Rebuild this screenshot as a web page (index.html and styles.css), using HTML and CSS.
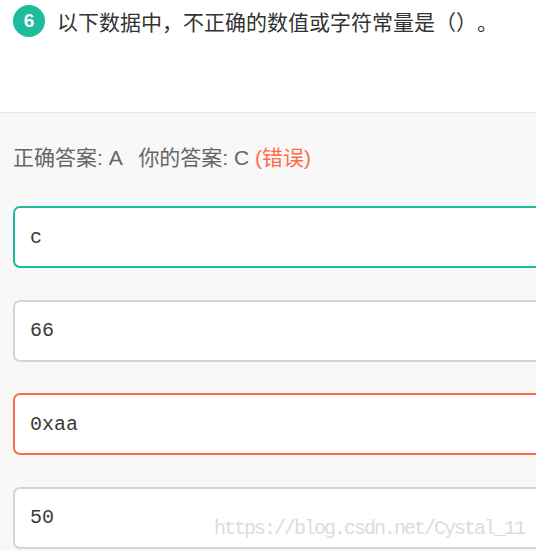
FILE: index.html
```html
<!DOCTYPE html>
<html lang="zh-CN">
<head>
<meta charset="utf-8">
<title>题目 6</title>
<link rel="stylesheet" href="styles.css">
</head>
<body>
<div class="page">
  <header class="question">
    <div class="question-row">
      <span class="badge">6</span>
      <span class="question-text">以下数据中，不正确的数值或字符常量是（）。</span>
    </div>
  </header>
  <section class="answers">
    <p class="result">
      <span class="label">正确答案: A</span>
      <span class="label">你的答案: C</span>
      <span class="wrong">(错误)</span>
    </p>
    <ul class="options">
      <li class="option option-correct">c</li>
      <li class="option">66</li>
      <li class="option option-wrong">0xaa</li>
      <li class="option">50</li>
    </ul>
  </section>
  <div class="watermark">https://blog.csdn.net/Cystal_11</div>
</div>
</body>
</html>
```

FILE: styles.css
```css
html, body {
  margin: 0;
  padding: 0;
  background: #f8f8f8;
  overflow: hidden;
}

.page {
  position: relative;
  width: 536px;
  height: 551px;
  overflow: hidden;
  font-family: "Liberation Sans", "Noto Sans CJK SC", sans-serif;
  text-spacing-trim: space-all;
}

.question {
  height: 113px;
  background: #ffffff;
  border-bottom: 1px solid #e6e6e6;
  box-sizing: border-box;
}

.question-row {
  display: flex;
  align-items: center;
  padding: 5px 0 0 13px;
}

.badge {
  width: 32px;
  height: 32px;
  border-radius: 50%;
  background: #1cbc9c;
  color: #ffffff;
  font-family: "Liberation Sans", sans-serif;
  font-weight: bold;
  font-size: 19px;
  display: flex;
  align-items: center;
  justify-content: center;
  flex-shrink: 0;
}

.question-text {
  margin-left: 12px;
  font-family: "Noto Sans CJK SC", sans-serif;
  font-size: 21px;
  color: #333333;
  line-height: 32px;
  white-space: nowrap;
  text-spacing-trim: space-all;
}

.answers {
  padding: 33px 0 0 13px;
}

.result {
  margin: 0;
  font-size: 21px;
  line-height: 24px;
  color: #666666;
  white-space: nowrap;
}

.label + .label {
  margin-left: 11px;
}

.wrong {
  color: #ff6b4a;
}

.options {
  list-style: none;
  margin: 36px 0 0 0;
  padding: 0;
  display: flex;
  flex-direction: column;
  gap: 31.5px;
}

.option {
  width: 560px;
  height: 62px;
  box-sizing: border-box;
  border: 2px solid #d4d4d4;
  border-radius: 7px;
  background: #ffffff;
  display: flex;
  align-items: center;
  padding-left: 15px;
  font-family: "Liberation Mono", monospace;
  font-size: 20px;
  color: #3a3a3a;
}

.option-correct {
  border-color: #1cbc9c;
}

.option-wrong {
  border-color: #ff6b4a;
}

.watermark {
  position: absolute;
  left: 214px;
  top: 517px;
  font-family: "Liberation Mono", monospace;
  font-size: 20px;
  letter-spacing: -2px;
  color: #dcdcdc;
  white-space: nowrap;
}
```
